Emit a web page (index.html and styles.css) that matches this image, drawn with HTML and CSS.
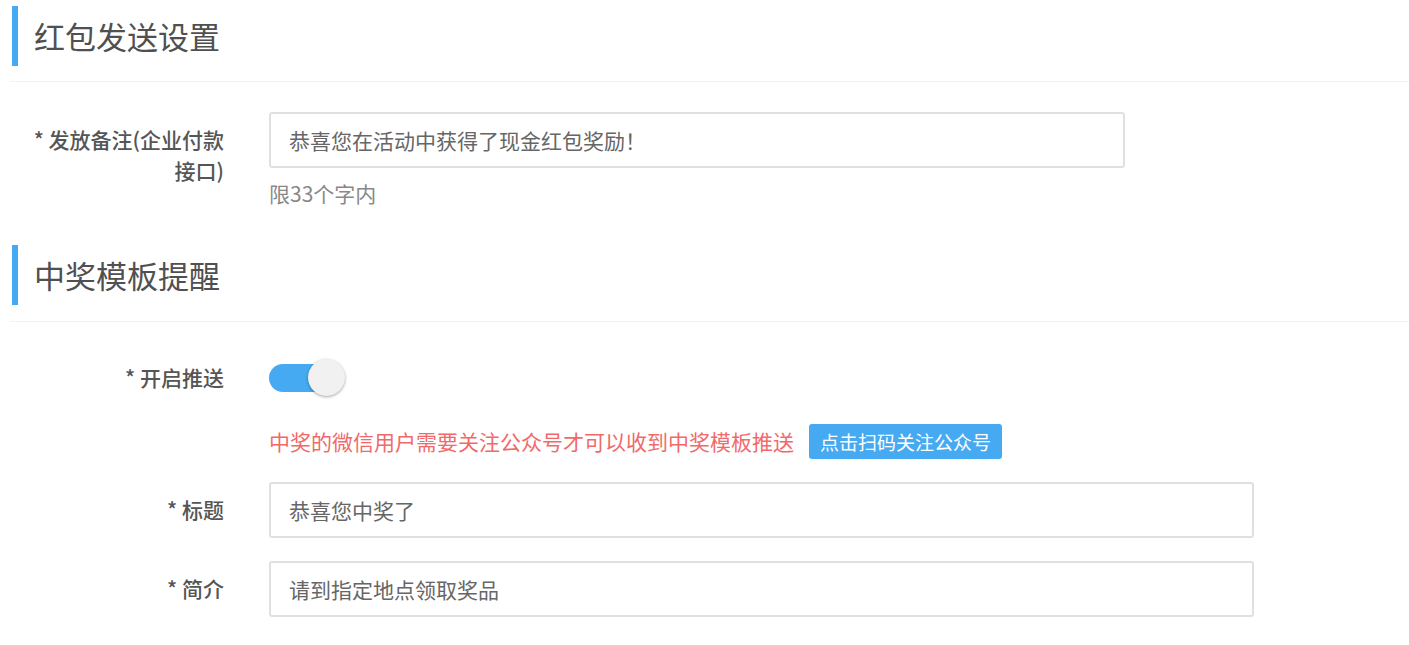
FILE: index.html
```html
<!DOCTYPE html>
<html lang="zh-CN">
<head>
<meta charset="utf-8">
<title>红包发送设置</title>
<link rel="stylesheet" href="styles.css">
</head>
<body>
<div class="page">
  <div class="section-head"><h2 class="section-title">红包发送设置</h2></div>
  <div class="form">
    <div class="form-row row-remark">
      <label class="form-label">* 发放备注(企业付款接口)</label>
      <div class="form-field">
        <div class="input input-mid">恭喜您在活动中获得了现金红包奖励！</div>
        <div class="hint">限33个字内</div>
      </div>
    </div>
  </div>

  <div class="section-head section-head-2"><h2 class="section-title">中奖模板提醒</h2></div>
  <div class="form form-2">
    <div class="form-row row-switch">
      <label class="form-label">* 开启推送</label>
      <div class="form-field">
        <span class="switch"><span class="switch-track"></span><span class="switch-knob"></span></span>
      </div>
    </div>
    <div class="form-row row-notice">
      <div class="form-label"></div>
      <div class="form-field notice">
        <span class="notice-text">中奖的微信用户需要关注公众号才可以收到中奖模板推送</span>
        <span class="btn">点击扫码关注公众号</span>
      </div>
    </div>
    <div class="form-row row-input">
      <label class="form-label">* 标题</label>
      <div class="form-field">
        <div class="input input-long">恭喜您中奖了</div>
      </div>
    </div>
    <div class="form-row row-input">
      <label class="form-label">* 简介</label>
      <div class="form-field">
        <div class="input input-long">请到指定地点领取奖品</div>
      </div>
    </div>
  </div>
</div>
</body>
</html>
```

FILE: styles.css
```css
html, body {
  margin: 0;
  padding: 0;
  background: #fff;
}
body {
  font-family: "Noto Sans CJK SC", "Noto Sans", sans-serif;
  color: #555;
}
.page {
  padding-top: 6px;
}
.section-head {
  margin-left: 10px;
  padding: 0 0 15px 2px;
  border-bottom: 1px solid #f2f2f2;
}
.section-head-2 {
  margin-top: 37px;
  padding-bottom: 16px;
}
.section-title {
  margin: 0;
  height: 60px;
  line-height: 60px;
  border-left: 6px solid #45aaf2;
  padding-left: 16px;
  font-size: 31px;
  font-weight: 400;
  color: #505050;
}
.form {
  padding-top: 30px;
}
.form-2 {
  padding-top: 37px;
}
.form-row {
  display: flex;
  align-items: flex-start;
}
.form-label {
  flex: 0 0 auto;
  width: 200px;
  margin-left: 24px;
  margin-right: 45px;
  text-align: right;
  font-size: 21px;
  font-weight: 500;
  line-height: 31px;
  padding-top: 12px;
  color: #555;
}
.form-field {
  flex: 1 1 auto;
  min-width: 0;
}
.input {
  box-sizing: border-box;
  height: 56px;
  border: 2px solid #e0e0e0;
  border-radius: 3px;
  padding: 0 18px;
  font-size: 21px;
  line-height: 52px;
  color: #666;
  background: #fff;
}
.input-mid {
  width: 856px;
}
.input-long {
  width: 985px;
}
.hint {
  margin-top: 10px;
  font-size: 21px;
  line-height: 30px;
  color: #888;
}
.row-switch .form-label {
  padding-top: 3px;
}
.switch {
  position: relative;
  display: block;
  width: 76px;
  height: 37px;
}
.switch-track {
  position: absolute;
  left: 0;
  top: 5px;
  width: 66px;
  height: 28px;
  border-radius: 14px;
  background: #45aaf2;
}
.switch-knob {
  position: absolute;
  left: 39px;
  top: 0;
  width: 37px;
  height: 37px;
  border-radius: 50%;
  background: #f1f1f1;
  box-shadow: 0 1px 3px rgba(0, 0, 0, 0.35);
}
.row-notice {
  margin-top: 28px;
}
.row-notice .form-label {
  padding-top: 0;
}
.notice {
  display: flex;
  align-items: center;
  gap: 15px;
  height: 35px;
}
.notice-text {
  font-size: 21px;
  color: #f06a6a;
  line-height: 35px;
}
.btn {
  display: inline-block;
  height: 35px;
  line-height: 35px;
  padding: 0 11px;
  background: #45aaf2;
  color: #fff;
  font-size: 19px;
  border-radius: 3px;
}
.row-input {
  margin-top: 23px;
}
.row-input .form-label {
  padding-top: 12px;
}
```
